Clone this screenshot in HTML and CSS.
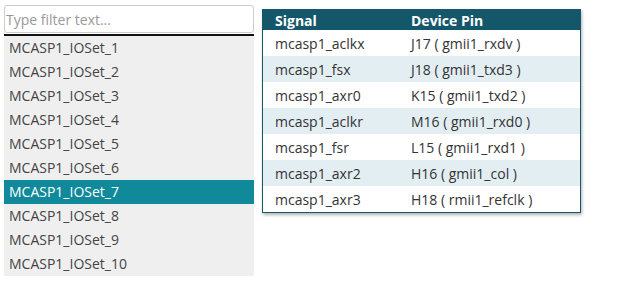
FILE: index.html
```html
<!DOCTYPE html>
<html lang="en">
<head>
  <meta charset="UTF-8">
  <title>IO Sets</title>
  <link rel="stylesheet" href="styles.css">
</head>
<body>
  <div class="layout">
    <div class="sets">
      <input class="filter" placeholder="Type filter text...">
      <ul class="set-list">
        <li>MCASP1_IOSet_1</li>
        <li>MCASP1_IOSet_2</li>
        <li>MCASP1_IOSet_3</li>
        <li>MCASP1_IOSet_4</li>
        <li>MCASP1_IOSet_5</li>
        <li>MCASP1_IOSet_6</li>
        <li class="selected">MCASP1_IOSet_7</li>
        <li>MCASP1_IOSet_8</li>
        <li>MCASP1_IOSet_9</li>
        <li>MCASP1_IOSet_10</li>
      </ul>
    </div>

    <table class="pins">
      <thead>
        <tr><th class="signal">Signal</th><th>Device Pin</th></tr>
      </thead>
      <tbody>
        <tr><td class="signal">mcasp1_aclkx</td><td>J17 ( gmii1_rxdv )</td></tr>
        <tr><td class="signal">mcasp1_fsx</td><td>J18 ( gmii1_txd3 )</td></tr>
        <tr><td class="signal">mcasp1_axr0</td><td>K15 ( gmii1_txd2 )</td></tr>
        <tr><td class="signal">mcasp1_aclkr</td><td>M16 ( gmii1_rxd0 )</td></tr>
        <tr><td class="signal">mcasp1_fsr</td><td>L15 ( gmii1_rxd1 )</td></tr>
        <tr><td class="signal">mcasp1_axr2</td><td>H16 ( gmii1_col )</td></tr>
        <tr><td class="signal">mcasp1_axr3</td><td>H18 ( rmii1_refclk )</td></tr>
      </tbody>
    </table>
  </div>
</body>
</html>
```

FILE: styles.css
```css
body {
    font-family: "Open Sans", Arial, sans-serif;
    margin: 0;
    padding: 5px 4px;
    background-color: #fff;
    color: #333;
}

.layout {
    display: flex;
    align-items: flex-start;
    gap: 8px;
}

.sets {
    width: 250px;
}

.filter {
    display: block;
    width: 100%;
    height: 28px;
    padding: 0 1px;
    box-sizing: border-box;
    border: 1px solid #ccc;
    border-radius: 3px;
    font-family: inherit;
    font-size: 14px;
    color: #333;
    outline: none;
}

.filter::placeholder {
    color: #999;
}

.set-list {
    list-style: none;
    margin: 1px 0 0;
    padding: 0;
    border-top: 2px solid #111;
    background-color: #efefef;
}

.set-list li {
    height: 24px;
    line-height: 24px;
    padding-left: 5px;
    font-size: 14px;
    color: #444;
}

.set-list li.selected {
    background-color: #10899a;
    color: #fff;
}

.pins {
    width: 319px;
    margin-top: 4px;
    border-collapse: collapse;
    border: 1px solid #14596b;
    box-shadow: 1px 2px 3px rgba(0, 0, 0, 0.3);
    font-size: 14px;
}

.pins th {
    height: 20px;
    padding: 0 12px;
    background-color: #14576a;
    color: #fff;
    text-align: left;
    font-weight: bold;
}

.pins td {
    height: 26px;
    padding: 0 12px;
    color: #333;
}

.pins .signal {
    width: 112px;
}

.pins tbody tr:nth-child(even) {
    background-color: #e3eef3;
}
```
